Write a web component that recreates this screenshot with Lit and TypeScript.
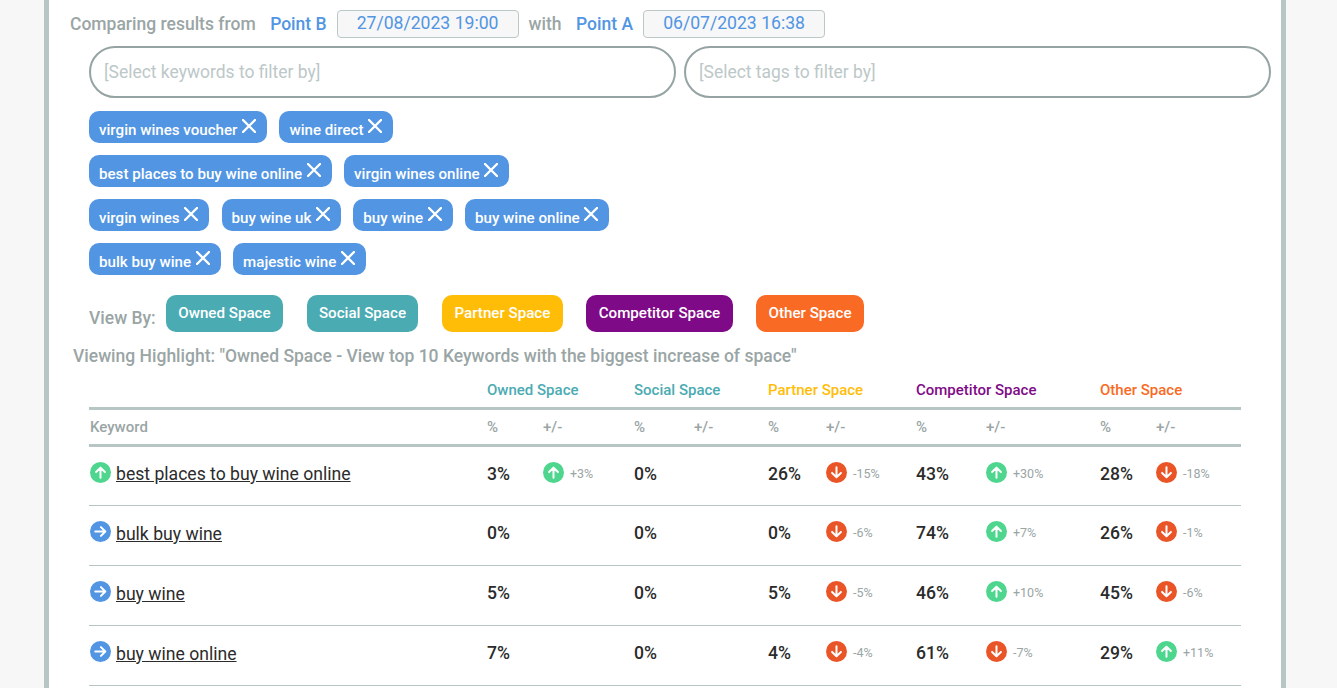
import { LitElement, html, css, svg } from "lit";
import { customElement } from "lit/decorators.js";

type Delta = { dir: "up" | "down"; text: string } | null;
type Cell = { pct: string; delta: Delta };
type Row = { trend: "up" | "right"; name: string; cells: Cell[] };

const u = (text: string): Delta => ({ dir: "up", text });
const d = (text: string): Delta => ({ dir: "down", text });
const c = (pct: string, delta: Delta = null): Cell => ({ pct, delta });

const rows: Row[] = [
  { trend: "up", name: "best places to buy wine online", cells: [c("3%", u("+3%")), c("0%"), c("26%", d("-15%")), c("43%", u("+30%")), c("28%", d("-18%"))] },
  { trend: "right", name: "bulk buy wine", cells: [c("0%"), c("0%"), c("0%", d("-6%")), c("74%", u("+7%")), c("26%", d("-1%"))] },
  { trend: "right", name: "buy wine", cells: [c("5%"), c("0%"), c("5%", d("-5%")), c("46%", u("+10%")), c("45%", d("-6%"))] },
  { trend: "right", name: "buy wine online", cells: [c("7%"), c("0%"), c("4%", d("-4%")), c("61%", d("-7%")), c("29%", u("+11%"))] },
];

const chipRows = [
  ["virgin wines voucher", "wine direct"],
  ["best places to buy wine online", "virgin wines online"],
  ["virgin wines", "buy wine uk", "buy wine", "buy wine online"],
  ["bulk buy wine", "majestic wine"],
];

const spaces = [
  { label: "Owned Space", cls: "owned" },
  { label: "Social Space", cls: "social" },
  { label: "Partner Space", cls: "partner" },
  { label: "Competitor Space", cls: "competitor" },
  { label: "Other Space", cls: "other" },
];

const arrows = {
  up: svg`<path d="M10 15V5.5M5.8 9.6 10 5.4l4.2 4.2"/>`,
  down: svg`<path d="M10 5v9.5M5.8 10.4 10 14.6l4.2-4.2"/>`,
  right: svg`<path d="M5 10h9.5M10.4 5.8 14.6 10l-4.2 4.2"/>`,
};

function arrow(kind: "up" | "down" | "right") {
  return html`<svg class="arrow ${kind}" viewBox="0 0 20 20" aria-hidden="true">
    <circle cx="10" cy="10" r="10"></circle>
    <g>${arrows[kind]}</g>
  </svg>`;
}

@customElement("app-root")
export class AppRoot extends LitElement {
  static styles = css`
    :host {
      display: block;
      height: 688px;
      overflow: hidden;
      background: #f7f7f7;
      font-family: Roboto, "Liberation Sans", sans-serif;
    }
    .card {
      box-sizing: border-box;
      width: 1242px;
      height: 688px;
      margin-left: 44px;
      padding: 10px 10px 0 21px;
      background: #fff;
      border-left: 5px solid #b8c5c5;
      border-right: 5px solid #b8c5c5;
    }
    .compare {
      display: flex;
      align-items: center;
      height: 28px;
      font-size: 17.5px;
      font-weight: 500;
      color: #9aa5a5;
    }
    .point { color: #5195e3; font-weight: 500; margin-left: 14.5px; }
    .date {
      box-sizing: border-box;
      width: 182px;
      height: 28px;
      margin-left: 10px;
      margin-right: 10px;
      border: 1px solid #bcc8c8;
      border-radius: 4px;
      background: #f7f7f7;
      color: #5195e3;
      font-weight: 400;
      font-size: 17.6px;
      line-height: 25px;
      text-align: center;
    }
    .filters {
      display: flex;
      gap: 8px;
      margin: 8px 0 0 19px;
    }
    .filter {
      box-sizing: border-box;
      width: 587px;
      height: 52px;
      border: 2px solid #95a3a3;
      border-radius: 26px;
      padding-left: 13px;
      font-size: 17.45px;
      line-height: 48px;
      color: #bcc8c8;
    }
    .chips { margin: 13px 0 0 19px; }
    .chip-row {
      display: flex;
      gap: 12.5px;
      height: 32px;
      margin-bottom: 12px;
    }
    .chip {
      display: flex;
      align-items: center;
      box-sizing: border-box;
      height: 32px;
      padding: 0 11px 0 10px;
      border-radius: 10px;
      background: #5195e3;
      color: #fff;
      font-size: 15.14px;
      font-weight: 500;
      white-space: nowrap;
    }
    .chip span { position: relative; top: 3px; }
    .chip svg {
      width: 14px;
      height: 14px;
      margin-left: 4.5px;
      margin-top: -2px;
      fill: none;
      stroke: #fff;
      stroke-width: 2.4;
      stroke-linecap: round;
    }
    .view {
      display: flex;
      align-items: center;
      margin: 20px 0 0 19px;
      height: 36px;
    }
    .view-label {
      width: 77px;
      font-size: 17.5px;
      font-weight: 500;
      color: #9aa5a5;
      position: relative;
      top: 5px;
    }
    .btn {
      box-sizing: border-box;
      height: 37px;
      padding: 0 12.3px;
      margin-right: 23.8px;
      border-radius: 10px;
      color: #fff;
      font-size: 15.14px;
      font-weight: 500;
      line-height: 36px;
      white-space: nowrap;
    }
    .btn.owned, .btn.social { background: #4babb2; }
    .btn.partner { background: #ffbd08; }
    .btn.competitor { background: #7f0a87; }
    .btn.other { background: #f96b25; }
    .highlight {
      margin: 15px 0 0 3px;
      font-size: 17.5px;
      font-weight: 500;
      line-height: 20px;
      color: #9aa5a5;
    }
    .table { margin: 0 0 0 19px; width: 1152px; }
    .grid {
      display: grid;
      grid-template-columns: 398px 56px 91px 60px 74px 58px 90px 70px 114px 56px 85px;
      align-items: center;
    }
    .groups {
      height: 41px;
      border-bottom: 3px solid #b8c5c5;
      font-size: 15px;
      font-weight: 500;
    }
    .groups div { position: relative; top: 3px; white-space: nowrap; }
    .owned-t, .social-t { color: #4babb2; }
    .partner-t { color: #ffbd08; }
    .competitor-t { color: #7f0a87; }
    .other-t { color: #f96b25; }
    .heads {
      height: 34px;
      border-bottom: 3px solid #b8c5c5;
      font-size: 15px;
      font-weight: 500;
      color: #9aa5a5;
    }
    .heads .kw { padding-left: 1px; }
    .row {
      height: 59px;
      border-bottom: 1px solid #b8c5c5;
      color: #2b2b2b;
    }
    .heads + .row { height: 58px; }
    .name {
      display: flex;
      align-items: flex-start;
      padding-left: 1px;
      height: 100%;
      padding-top: 15px;
      box-sizing: border-box;
    }
    .name a {
      margin-left: 5px;
      margin-top: 1px;
      font-size: 17.6px;
      line-height: 24px;
      color: #2b2b2b;
      text-decoration: underline;
    }
    .heads + .row .name a { margin-top: 0; }
    .pct {
      align-self: start;
      padding-top: 17px;
      font-size: 17.6px;
      line-height: 20px;
      font-weight: 500;
    }
    .delta {
      align-self: start;
      display: flex;
      align-items: center;
      padding-top: 15px;
      height: 21px;
    }
    .delta small {
      margin-left: 6px;
      padding-top: 1px;
      font-size: 12.5px;
      color: #9aa5a5;
    }
    .arrow { width: 21px; height: 21px; flex: none; }
    .arrow g {
      fill: none;
      stroke: #fff;
      stroke-width: 1.9;
      stroke-linecap: round;
      stroke-linejoin: round;
    }
    .arrow.up circle { fill: #4fd68e; }
    .arrow.down circle { fill: #ea5527; }
    .arrow.right circle { fill: #5195e3; }
  `;

  render() {
    return html`<div class="card">
      <div class="compare">
        <span>Comparing results from</span>
        <span class="point">Point B</span>
        <div class="date">27/08/2023 19:00</div>
        <span>with</span>
        <span class="point">Point A</span>
        <div class="date">06/07/2023 16:38</div>
      </div>
      <div class="filters">
        <div class="filter">[Select keywords to filter by]</div>
        <div class="filter">[Select tags to filter by]</div>
      </div>
      <div class="chips">
        ${chipRows.map(
          (r) => html`<div class="chip-row">
            ${r.map(
              (t) => html`<div class="chip"><span>${t}</span>
                <svg viewBox="0 0 14 14" aria-hidden="true"><path d="M1 1l12 12M13 1L1 13"></path></svg>
              </div>`
            )}
          </div>`
        )}
      </div>
      <div class="view">
        <div class="view-label">View By:</div>
        ${spaces.map((s) => html`<div class="btn ${s.cls}">${s.label}</div>`)}
      </div>
      <div class="highlight">Viewing Highlight: "Owned Space - View top 10 Keywords with the biggest increase of space"</div>
      <div class="table">
        <div class="grid groups">
          <div></div>
          ${spaces.map(
            (s) => html`<div class="${s.cls}-t">${s.label}</div><div></div>`
          )}
        </div>
        <div class="grid heads">
          <div class="kw">Keyword</div>
          ${spaces.map(() => html`<div>%</div><div>+/-</div>`)}
        </div>
        ${rows.map(
          (r) => html`<div class="grid row">
            <div class="name">${arrow(r.trend)}<a>${r.name}</a></div>
            ${r.cells.map(
              (x) => html`<div class="pct">${x.pct}</div>
                ${x.delta
                  ? html`<div class="delta">${arrow(x.delta.dir)}<small>${x.delta.text}</small></div>`
                  : html`<div></div>`}`
            )}
          </div>`
        )}
      </div>
    </div>`;
  }
}
